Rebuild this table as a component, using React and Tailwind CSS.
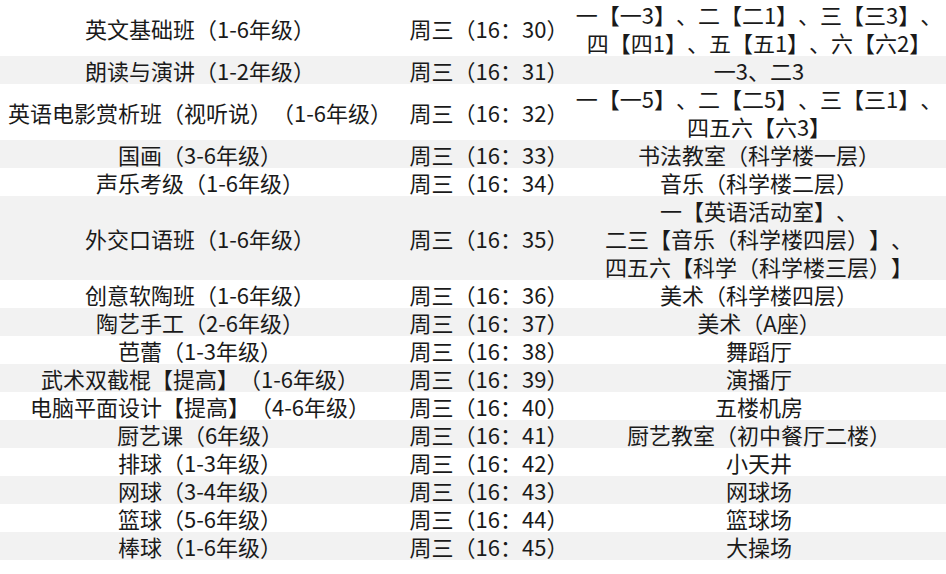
import React from "react";

const rows = [
  { name: "英文基础班（1-6年级）", time: "周三（16：30）", place: ["一【一3】、二【二1】、三【三3】、", "四【四1】、五【五1】、六【六2】"] },
  { name: "朗读与演讲（1-2年级）", time: "周三（16：31）", place: ["一3、二3"] },
  { name: "英语电影赏析班（视听说）（1-6年级）", time: "周三（16：32）", place: ["一【一5】、二【二5】、三【三1】、", "四五六【六3】"] },
  { name: "国画（3-6年级）", time: "周三（16：33）", place: ["书法教室（科学楼一层）"] },
  { name: "声乐考级（1-6年级）", time: "周三（16：34）", place: ["音乐（科学楼二层）"] },
  { name: "外交口语班（1-6年级）", time: "周三（16：35）", place: ["一【英语活动室】、", "二三【音乐（科学楼四层）】、", "四五六【科学（科学楼三层）】"] },
  { name: "创意软陶班（1-6年级）", time: "周三（16：36）", place: ["美术（科学楼四层）"] },
  { name: "陶艺手工（2-6年级）", time: "周三（16：37）", place: ["美术（A座）"] },
  { name: "芭蕾（1-3年级）", time: "周三（16：38）", place: ["舞蹈厅"] },
  { name: "武术双截棍【提高】（1-6年级）", time: "周三（16：39）", place: ["演播厅"] },
  { name: "电脑平面设计【提高】（4-6年级）", time: "周三（16：40）", place: ["五楼机房"] },
  { name: "厨艺课（6年级）", time: "周三（16：41）", place: ["厨艺教室（初中餐厅二楼）"] },
  { name: "排球（1-3年级）", time: "周三（16：42）", place: ["小天井"] },
  { name: "网球（3-4年级）", time: "周三（16：43）", place: ["网球场"] },
  { name: "篮球（5-6年级）", time: "周三（16：44）", place: ["篮球场"] },
  { name: "棒球（1-6年级）", time: "周三（16：45）", place: ["大操场"] },
];

export default function App() {
  return (
    <div
      className="min-h-[574px] w-[946px] bg-white text-[22px] leading-[28px] text-[#1a1a1a] [text-spacing-trim:space-all]"
      style={{ fontFamily: '"Noto Sans CJK SC", sans-serif' }}
    >
      {rows.map((row, idx) => (
        <div
          key={idx}
          className={`grid grid-cols-[400px_172px_374px] items-center ${
            idx % 2 === 1 ? "bg-[#f2f2f2]" : "bg-white"
          }`}
        >
          <div className="whitespace-nowrap text-center">{row.name}</div>
          <div className="whitespace-nowrap pl-[6px] text-center">{row.time}</div>
          <div className="flex flex-col items-center">
            {row.place.map((line, lIdx) => (
              <span key={lIdx} className="whitespace-nowrap">
                {line}
              </span>
            ))}
          </div>
        </div>
      ))}
    </div>
  );
}
